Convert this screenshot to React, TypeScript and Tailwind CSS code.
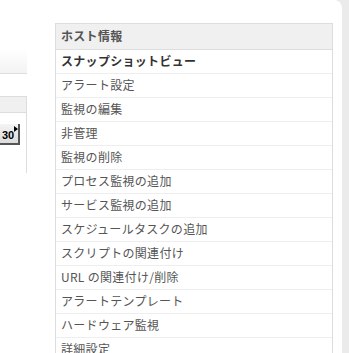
import React from 'react';

const items = [
  'スナップショットビュー',
  'アラート設定',
  '監視の編集',
  '非管理',
  '監視の削除',
  'プロセス監視の追加',
  'サービス監視の追加',
  'スケジュールタスクの追加',
  'スクリプトの関連付け',
  'URL の関連付け/削除',
  'アラートテンプレート',
  'ハードウェア監視',
  '詳細設定',
];

const App: React.FC = () => {
  return (
    <div
      className="flex w-[349px] h-[353px] overflow-hidden bg-[#ebebeb]"
      style={{ fontFamily: '"Noto Sans CJK JP", "Noto Sans", sans-serif' }}
    >
      <div className="flex w-[342px] shrink-0 bg-white rounded-tr-[8px]">
        {/* left column, cut off */}
        <div className="w-[27px] shrink-0 flex flex-col">
          <div className="mt-[49px] h-[25px] bg-gradient-to-b from-white to-[#f3f3f3] border-b border-[#dddddd]" />
          <div className="mt-[22px] border-t border-r border-[#dddddd]">
            <div className="h-[16px] bg-[#f0f0f0] border-b border-[#dddddd]" />
            <div className="pt-[11px] h-[60px]">
              <div className="relative w-[20px] h-[21px] bg-gradient-to-b from-[#f4f4f4] to-[#dcdcdc] border-r-2 border-b-2 border-[#555] flex items-end pl-[2px] pb-[2px]">
                <span className="text-[11px] font-bold leading-none text-black" style={{ fontFamily: '"Liberation Sans", Arial, sans-serif' }}>30</span>
                <span className="absolute right-[0px] top-[2px] w-0 h-0 border-y-[3px] border-y-transparent border-l-[4px] border-l-black" />
              </div>
            </div>
          </div>
        </div>

        <div className="w-[28px] shrink-0" />

        {/* host info menu */}
        <div className="w-[278px] shrink-0 mt-[23px] border border-b-0 border-[#dddddd] self-start">
          <div className="h-[26px] bg-[#f0f0f0] border-b border-[#dddddd] pl-[5px] pb-[1px] flex items-center text-[12px] tracking-[0.3px] font-bold text-[#555]">
            ホスト情報
          </div>
          {items.map((t, i) => (
            <div
              key={i}
              className={`h-[24px] border-b border-[#eeeeee] pl-[5px] pb-[1px] flex items-center text-[12px] tracking-[0.3px] ${
                i === 0 ? 'font-bold text-[#333]' : 'text-[#555]'
              }`}
            >
              {t}
            </div>
          ))}
        </div>
      </div>
    </div>
  );
};

export default App;
